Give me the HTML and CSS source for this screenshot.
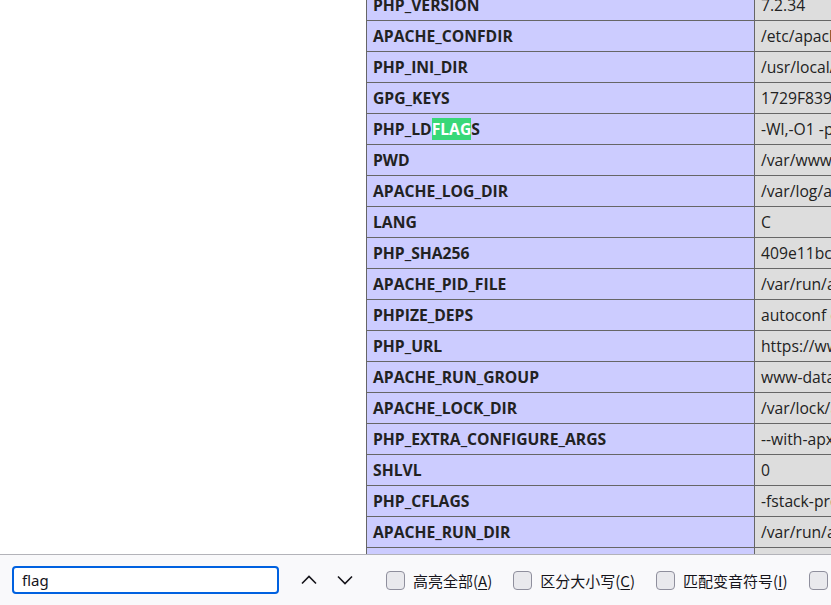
FILE: index.html
```html
<!DOCTYPE html>
<html lang="zh">
<head>
<meta charset="utf-8">
<title>phpinfo()</title>
<link rel="stylesheet" href="styles.css">
</head>
<body>
<div class="page">
  <table class="info">
    <tr><td class="e">PHP_VERSION</td><td class="v">7.2.34</td></tr>
    <tr><td class="e">APACHE_CONFDIR</td><td class="v">/etc/apache2</td></tr>
    <tr><td class="e">PHP_INI_DIR</td><td class="v">/usr/local/etc/php</td></tr>
    <tr><td class="e">GPG_KEYS</td><td class="v">1729F83938DA44E27BA0F4D3DBDB397470D12172 B1B44D7A08CB43CF</td></tr>
    <tr><td class="e">PHP_LD<span class="hit">FLAG</span>S</td><td class="v">-Wl,-O1 -pie</td></tr>
    <tr><td class="e">PWD</td><td class="v">/var/www/html</td></tr>
    <tr><td class="e">APACHE_LOG_DIR</td><td class="v">/var/log/apache2</td></tr>
    <tr><td class="e">LANG</td><td class="v">C</td></tr>
    <tr><td class="e">PHP_SHA256</td><td class="v">409e11bc6a2c18707dfc44bc61c820ddfd81e17481470f3405ee7d4d8c6f67e4</td></tr>
    <tr><td class="e">APACHE_PID_FILE</td><td class="v">/var/run/apache2/apache2.pid</td></tr>
    <tr><td class="e">PHPIZE_DEPS</td><td class="v">autoconf dpkg-dev file g++ gcc libc-dev make pkg-config re2c</td></tr>
    <tr><td class="e">PHP_URL</td><td class="v">https://www.php.net/distributions/php-7.2.34.tar.xz</td></tr>
    <tr><td class="e">APACHE_RUN_GROUP</td><td class="v">www-data</td></tr>
    <tr><td class="e">APACHE_LOCK_DIR</td><td class="v">/var/lock/apache2</td></tr>
    <tr><td class="e">PHP_EXTRA_CONFIGURE_ARGS</td><td class="v">--with-apxs2 --disable-cgi</td></tr>
    <tr><td class="e">SHLVL</td><td class="v">0</td></tr>
    <tr><td class="e">PHP_CFLAGS</td><td class="v">-fstack-protector-strong -fpic -fpie -O2</td></tr>
    <tr><td class="e">APACHE_RUN_DIR</td><td class="v">/var/run/apache2</td></tr>
    <tr><td class="e">APACHE_RUN_USER</td><td class="v">www-data</td></tr>
  </table>
</div>
<div class="findbar">
  <div class="find-input">flag</div>
  <button class="nav-btn up" aria-label="上一个">
    <svg width="16" height="16" viewBox="0 0 16 16"><path d="M1 11.5 L8 4.5 L15 11.5" fill="none" stroke="#15141a" stroke-width="1.6"/></svg>
  </button>
  <button class="nav-btn" aria-label="下一个">
    <svg width="16" height="16" viewBox="0 0 16 16"><path d="M1 4.5 L8 11.5 L15 4.5" fill="none" stroke="#15141a" stroke-width="1.6"/></svg>
  </button>
  <label class="opt first"><span class="box"></span><span class="txt">高亮全部(<u>A</u>)</span></label>
  <label class="opt"><span class="box"></span><span class="txt">区分大小写(<u>C</u>)</span></label>
  <label class="opt"><span class="box"></span><span class="txt">匹配变音符号(<u>I</u>)</span></label>
  <label class="opt"><span class="box"></span><span class="txt">全字匹配(<u>W</u>)</span></label>
</div>
</body>
</html>
```
FILE: styles.css
```css
html, body {
  margin: 0;
  padding: 0;
  background: #fff;
}
body {
  width: 831px;
  height: 605px;
  overflow: hidden;
  display: flex;
  flex-direction: column;
}
.page {
  height: 554px;
  flex: none;
  overflow: hidden;
}
.info {
  margin-left: 366px;
  margin-top: -11px;
  width: 1167px;
  table-layout: fixed;
  border-collapse: collapse;
  font-family: "Open Sans", "Noto Sans", sans-serif;
  color: #222;
}
.info td {
  border: 1px solid #666;
  font-size: 15.7px;
  line-height: 20px;
  height: 20px;
  padding: 5px 6px;
  vertical-align: baseline;
  white-space: nowrap;
  overflow: hidden;
}
.e {
  background: #ccf;
  width: 375px;
  font-weight: bold;
}
.v {
  background: #ddd;
}
.v {
  padding-left: 7px;
}
.hit {
  background: #38d878;
  color: #fff;
}
.findbar {
  flex: 1;
  border-top: 1px solid #b3b3b9;
  background: #f9f9fb;
  display: flex;
  align-items: center;
  padding-left: 12px;
  font-family: "Noto Sans", "Noto Sans CJK SC", sans-serif;
  color: #15141a;
  white-space: nowrap;
}
.findbar > * {
  flex: none;
}
.find-input {
  box-sizing: border-box;
  width: 267px;
  height: 28px;
  border: 2px solid #0061e0;
  border-radius: 4px;
  background: #fff;
  padding-left: 8px;
  font-size: 15px;
  line-height: 24px;
}
.nav-btn {
  width: 36px;
  height: 32px;
  border: 0;
  background: transparent;
  padding: 0;
  display: flex;
  align-items: center;
  justify-content: center;
}
.nav-btn.up {
  margin-left: 12px;
}
.opt {
  display: flex;
  align-items: center;
  margin-left: 21px;
  font-family: "Noto Sans CJK SC", sans-serif;
  font-size: 15px;
}
.opt.first {
  margin-left: 23px;
}
.box {
  box-sizing: border-box;
  width: 19px;
  height: 19px;
  border: 1px solid #8f8f9d;
  border-radius: 4px;
  background: #e9e9ed;
  margin-right: 8px;
  flex: none;
}
.txt u {
  text-underline-offset: 2px;
}
```
